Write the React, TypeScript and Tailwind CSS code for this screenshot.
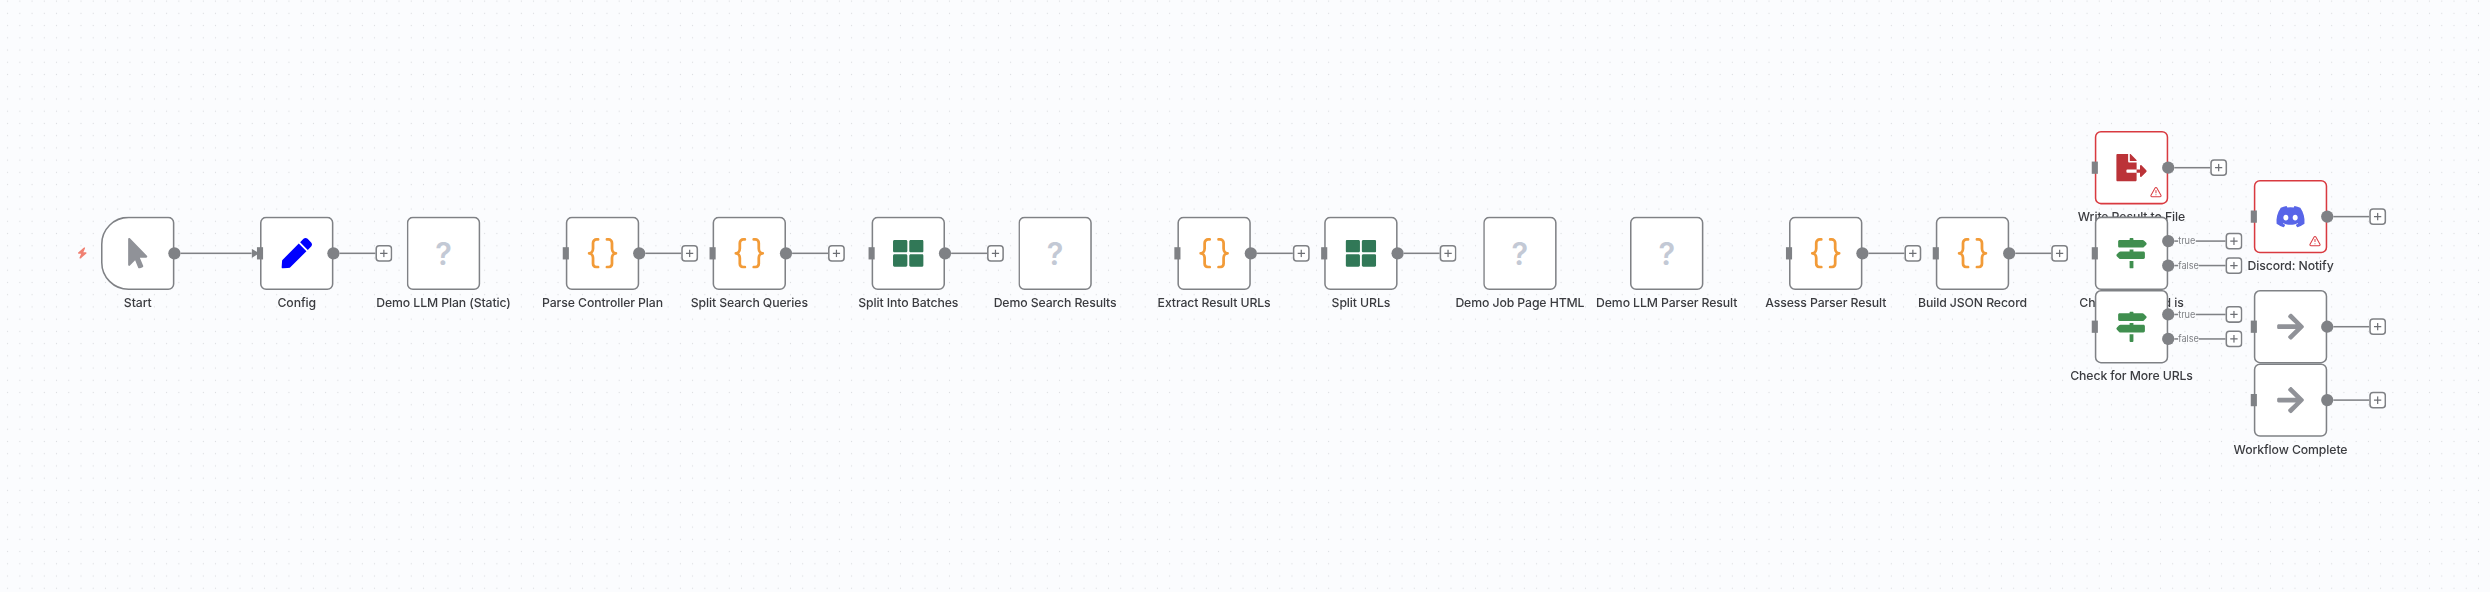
import React from "react";
import {
  FaArrowRight,
  FaDiscord,
  FaFileExport,
  FaMapSigns,
  FaMousePointer,
  FaPen,
  FaThLarge,
} from "react-icons/fa";
import { FaBolt } from "react-icons/fa6";
import { TriangleAlert } from "lucide-react";

type Kind = "pointer" | "pen" | "unknown" | "code" | "sheet" | "signs" | "export" | "discord" | "arrow";

interface FlowNode {
  col: number;
  row: number;
  label: string;
  kind: Kind;
  start?: boolean;
  error?: boolean;
  linked?: boolean;
}

const GRID = 16;

const nodes: FlowNode[] = [
  { col: 0, row: 7, label: "Start", kind: "pointer", start: true, linked: true },
  { col: 13, row: 7, label: "Config", kind: "pen" },
  { col: 25, row: 7, label: "Demo LLM Plan (Static)", kind: "unknown" },
  { col: 38, row: 7, label: "Parse Controller Plan", kind: "code" },
  { col: 50, row: 7, label: "Split Search Queries", kind: "code" },
  { col: 63, row: 7, label: "Split Into Batches", kind: "sheet" },
  { col: 75, row: 7, label: "Demo Search Results", kind: "unknown" },
  { col: 88, row: 7, label: "Extract Result URLs", kind: "code" },
  { col: 100, row: 7, label: "Split URLs", kind: "sheet" },
  { col: 113, row: 7, label: "Demo Job Page HTML", kind: "unknown" },
  { col: 125, row: 7, label: "Demo LLM Parser Result", kind: "unknown" },
  { col: 138, row: 7, label: "Assess Parser Result", kind: "code" },
  { col: 150, row: 7, label: "Build JSON Record", kind: "code" },
  { col: 163, row: 0, label: "Write Result to File", kind: "export", error: true },
  { col: 163, row: 7, label: "Check if Record is", kind: "signs" },
  { col: 163, row: 13, label: "Check for More URLs", kind: "signs" },
  { col: 176, row: 4, label: "Discord: Notify", kind: "discord", error: true },
  { col: 176, row: 13, label: "", kind: "arrow" },
  { col: 176, row: 19, label: "Workflow Complete", kind: "arrow" },
];

function Braces() {
  return (
    <svg width="40" height="40" viewBox="0 0 40 40" fill="none" stroke="#f29b38" strokeWidth="3.6" strokeLinecap="round" strokeLinejoin="round">
      <path d="M14.2 1.8h-2a4.6 4.6 0 0 0-4.6 4.6v7.4c0 3.4-2.2 6.2-5.2 6.2 3 0 5.2 2.8 5.2 6.2v7.4a4.6 4.6 0 0 0 4.6 4.6h2" />
      <path d="M25.8 1.8h2a4.6 4.6 0 0 1 4.6 4.6v7.4c0 3.4 2.2 6.2 5.2 6.2-3 0-5.2 2.8-5.2 6.2v7.4a4.6 4.6 0 0 1-4.6 4.6h-2" />
    </svg>
  );
}

function Icon({ kind }: { kind: Kind }) {
  switch (kind) {
    case "pointer":
      return <FaMousePointer size={40} className="text-[#909298]" />;
    case "pen":
      return <FaPen size={40} className="text-[#0000ff]" />;
    case "unknown":
      return <span className="pt-0.5 text-[40px] leading-none font-semibold text-[#c3c9d5]">?</span>;
    case "code":
      return <Braces />;
    case "sheet":
      return <FaThLarge size={40} className="text-[#317857]" />;
    case "signs":
      return <FaMapSigns size={40} className="text-[#408f4f]" />;
    case "export":
      return <FaFileExport size={40} className="text-[#bb3338]" />;
    case "discord":
      return <FaDiscord size={40} className="text-[#5865e8]" />;
    case "arrow":
      return <FaArrowRight size={40} className="text-[#909298]" />;
  }
}

function Output({ label }: { label?: string }) {
  return (
    <div className="flex h-4 items-center">
      <div className="size-4 shrink-0 rounded-full bg-[#7f8185]" />
      {label ? (
        <div className="flex w-[67px] items-center">
          <div className="h-[2.4px] w-[5px] bg-[#7f8185]" />
          <span className="text-xs leading-none text-[#7f8185]">{label}</span>
          <div className="h-[2.4px] grow bg-[#7f8185]" />
        </div>
      ) : (
        <div className="h-[2.4px] w-[47px] bg-[#7f8185]" />
      )}
      <div className="flex size-[22px] shrink-0 items-center justify-center rounded-[5px] border-[2.4px] border-[#7f8185] bg-white">
        <svg width="10" height="10" viewBox="0 0 10 10" stroke="#6d6f74" strokeWidth="1.6">
          <path d="M5 0v10M0 5h10" />
        </svg>
      </div>
    </div>
  );
}

function Outputs({ node }: { node: FlowNode }) {
  if (node.kind === "unknown") return null;
  if (node.kind === "signs") {
    return (
      <div className="absolute top-1/2 left-[88px] flex -translate-y-1/2 flex-col gap-4">
        <Output label="true" />
        <Output label="false" />
      </div>
    );
  }
  if (node.linked) {
    return (
      <div className="absolute top-1/2 left-[88px] flex -translate-y-1/2 items-center">
        <div className="size-4 rounded-full bg-[#7f8185]" />
        <div className="h-[2.4px] w-[93px] bg-[#7f8185]" />
        <svg width="10" height="12" viewBox="0 0 10 12" fill="#7f8185">
          <path d="M0 0l10 6-10 6z" />
        </svg>
      </div>
    );
  }
  return (
    <div className="absolute top-1/2 left-[88px] -translate-y-1/2">
      <Output />
    </div>
  );
}

function NodeView({ node }: { node: FlowNode }) {
  const shape = node.start ? "rounded-l-[36px] rounded-r-lg" : "rounded-lg";
  const border = node.error ? "border-[#d93a40]" : "border-[#7f8185]";
  return (
    <div className="absolute size-24" style={{ left: node.col * GRID, top: node.row * GRID }}>
      <div className={`flex size-24 items-center justify-center border-[2.7px] bg-white ${shape} ${border}`}>
        <Icon kind={node.kind} />
      </div>
      {node.error && (
        <TriangleAlert size={16} strokeWidth={2} className="absolute right-2 bottom-2 text-[#d93a40]" />
      )}
      {node.start && <FaBolt size={15} className="absolute top-10 -left-8 text-[#f08072]" />}
      {!node.start && node.kind !== "unknown" && (
        <div className="absolute top-10 -left-1 h-4 w-2 bg-[#7f8185]" />
      )}
      <Outputs node={node} />
      <div className="absolute top-[102px] left-1/2 -translate-x-1/2 text-base leading-5 font-medium tracking-[-0.12px] whitespace-nowrap text-[#3b3c40]">
        {node.label}
      </div>
    </div>
  );
}

export default function App() {
  return (
    <main className="relative h-[592px] w-[2490px] overflow-hidden bg-[#fbfcfe] font-['Inter',sans-serif]">
      <svg className="absolute inset-0" width="2490" height="592">
        <defs>
          <pattern id="grid-dots" x="1.5" y="-5" width="12.232" height="12.232" patternUnits="userSpaceOnUse">
            <circle cx="6.116" cy="6.116" r="0.6" fill="#d9dbdf" />
          </pattern>
        </defs>
        <rect width="2490" height="592" fill="url(#grid-dots)" />
      </svg>
      <div className="absolute top-[131.3px] left-[100.8px] origin-top-left scale-[0.7645]">
        {nodes.map((node) => (
          <NodeView key={`${node.col}-${node.row}`} node={node} />
        ))}
      </div>
    </main>
  );
}
